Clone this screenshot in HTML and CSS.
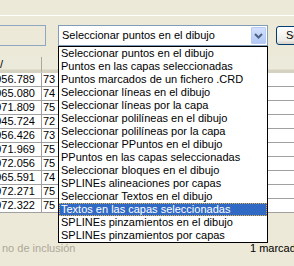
FILE: index.html
```html
<!DOCTYPE html>
<html lang="es">
<head>
    <meta charset="UTF-8">
    <title>Selección</title>
    <link rel="stylesheet" href="styles.css">
</head>
<body>
    <div class="window">
        <div class="rule"></div>
        <div class="toolbar">
            <div class="textbox"></div>
            <div class="combo">
                <span class="combo-text">Seleccionar puntos en el dibujo</span>
                <span class="combo-btn">
                    <svg width="9" height="6" viewBox="0 0 9 6"><path d="M1 1 L4.5 4.5 L8 1" fill="none" stroke="#4D6185" stroke-width="2"/></svg>
                </span>
            </div>
            <button class="btn" type="button">Seleccionar</button>
        </div>

        <div class="grid">
            <div class="hcell c1">/</div><div class="hcell c2"></div><div class="hcell c3"></div>
            <div class="cell c1">4956.789</div><div class="cell c2">73</div><div class="cell c3"></div>
            <div class="cell c1">4965.080</div><div class="cell c2">74</div><div class="cell c3"></div>
            <div class="cell c1">4971.809</div><div class="cell c2">75</div><div class="cell c3"></div>
            <div class="cell c1">4945.724</div><div class="cell c2">72</div><div class="cell c3"></div>
            <div class="cell c1">4956.426</div><div class="cell c2">73</div><div class="cell c3"></div>
            <div class="cell c1">4971.969</div><div class="cell c2">75</div><div class="cell c3"></div>
            <div class="cell c1">4972.056</div><div class="cell c2">75</div><div class="cell c3"></div>
            <div class="cell c1">4965.591</div><div class="cell c2">74</div><div class="cell c3"></div>
            <div class="cell c1">4972.271</div><div class="cell c2">75</div><div class="cell c3"></div>
            <div class="cell c1">4972.322</div><div class="cell c2">75</div><div class="cell c3"></div>
        </div>

        <div class="status">
            <span class="status-left">no de inclusión</span>
            <span class="status-right">1 marcados</span>
        </div>

        <ul class="dropdown">
            <li>Seleccionar puntos en el dibujo</li>
            <li>Puntos en las capas seleccionadas</li>
            <li>Puntos marcados de un fichero .CRD</li>
            <li>Seleccionar líneas en el dibujo</li>
            <li>Seleccionar líneas por la capa</li>
            <li>Seleccionar polilíneas en el dibujo</li>
            <li>Seleccionar polilíneas por la capa</li>
            <li>Seleccionar PPuntos en el dibujo</li>
            <li>PPuntos en las capas seleccionadas</li>
            <li>Seleccionar bloques en el dibujo</li>
            <li>SPLINEs alineaciones por capas</li>
            <li>Seleccionar Textos en el dibujo</li>
            <li class="selected">Textos en las capas seleccionadas</li>
            <li>SPLINEs pinzamientos en el dibujo</li>
            <li>SPLINEs pinzamientos por capas</li>
        </ul>
    </div>
</body>
</html>
```

FILE: styles.css
```css
body {
    margin: 0;
    background-color: #ECE9D8;
    font-family: "Liberation Sans", Arial, sans-serif;
    font-size: 11px;
    color: #000;
}
.window {
    position: relative;
    width: 294px;
    height: 266px;
    overflow: hidden;
}
.rule {
    height: 1px;
    margin-top: 15px;
    background-color: #fff;
}
.toolbar {
    display: flex;
    align-items: flex-start;
    margin-top: 9px;
    height: 21px;
}
.textbox {
    flex: none;
    width: 54px;
    height: 19px;
    margin-left: -10px;
    border: 1px solid #8FA6C0;
}
.combo {
    flex: none;
    display: flex;
    align-items: center;
    justify-content: space-between;
    box-sizing: border-box;
    width: 210px;
    height: 21px;
    margin-left: 12px;
    padding: 0 1px 0 3px;
    border: 1px solid #7F9DB9;
    background-color: #fff;
}
.combo-text {
    line-height: 19px;
    white-space: nowrap;
}
.combo-btn {
    display: flex;
    align-items: center;
    justify-content: center;
    box-sizing: border-box;
    width: 15px;
    height: 17px;
    border: 1px solid #B9CBF3;
    border-radius: 1px;
    background: linear-gradient(#D3E0FD, #B3C8F5);
}
.btn {
    flex: none;
    box-sizing: border-box;
    width: 90px;
    height: 19px;
    margin: 1px 0 0 8px;
    padding: 0 0 0 9px;
    border: 1px solid #003C74;
    border-radius: 3px;
    background: linear-gradient(#FFFFFF, #ECEBE6 80%, #D6D0C5);
    font-family: inherit;
    font-size: 11px;
    text-align: left;
    line-height: 17px;
}
.grid {
    display: grid;
    grid-template-columns: 62px 60px 1fr;
    margin: 11px 0 0 -20px;
    background-color: #fff;
}
.hcell {
    box-sizing: border-box;
    height: 16px;
    padding: 1px 0 0 20px;
    background-color: #EBEADB;
    border-bottom: 3px solid #D6D2C2;
    box-shadow: inset 0 -1px 0 #E2DECD;
    line-height: 12px;
}
.hcell.c1 {
    border-right: 1px solid #ACA899;
}
.cell {
    box-sizing: border-box;
    height: 14px;
    line-height: 13px;
    border-bottom: 1px solid #A0A0A0;
    white-space: nowrap;
    overflow: hidden;
}
.cell.c1 {
    border-right: 1px solid #A0A0A0;
    text-align: right;
    padding-right: 6px;
}
.cell.c2 {
    padding-left: 1px;
}
.status {
    display: flex;
    justify-content: space-between;
    margin-top: 29px;
    line-height: 13px;
    white-space: nowrap;
}
.status-left {
    padding-left: 2px;
    color: #ACA899;
}
.status-right {
    width: 44px;
    overflow: hidden;
}
.dropdown {
    position: absolute;
    left: 58px;
    top: 46px;
    width: 208px;
    margin: 0;
    padding: 0;
    list-style: none;
    border: 1px solid #000;
    background-color: #fff;
}
.dropdown li {
    height: 13px;
    line-height: 13px;
    padding-left: 2px;
    white-space: nowrap;
}
.dropdown li.selected {
    background-color: #316AC5;
    color: #fff;
    outline: 1px dotted #E8B040;
    outline-offset: -1px;
}
```
